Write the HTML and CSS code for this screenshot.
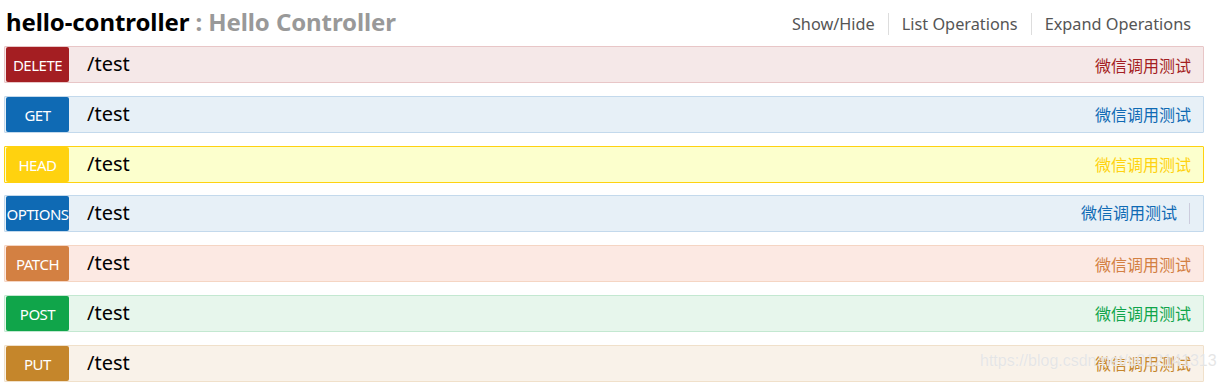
FILE: index.html
```html
<!DOCTYPE html>
<html lang="en">
<head>
    <meta charset="UTF-8">
    <title>hello-controller</title>
    <link rel="stylesheet" href="styles.css">
</head>
<body>

<div class="resource">
    <div class="heading">
        <h2><span class="name">hello-controller</span> <span class="desc">: Hello Controller</span></h2>
        <ul class="options">
            <li><a href="#">Show/Hide</a></li>
            <li><a href="#">List Operations</a></li>
            <li><a href="#">Expand Operations</a></li>
        </ul>
    </div>

    <div class="operation delete">
        <span class="method">DELETE</span>
        <span class="path">/test</span>
        <span class="summary">微信调用测试</span>
    </div>
    <div class="operation get">
        <span class="method">GET</span>
        <span class="path">/test</span>
        <span class="summary">微信调用测试</span>
    </div>
    <div class="operation head">
        <span class="method">HEAD</span>
        <span class="path">/test</span>
        <span class="summary">微信调用测试</span>
    </div>
    <div class="operation options-op">
        <span class="method">OPTIONS</span>
        <span class="path">/test</span>
        <span class="summary divided">微信调用测试</span>
    </div>
    <div class="operation patch">
        <span class="method">PATCH</span>
        <span class="path">/test</span>
        <span class="summary">微信调用测试</span>
    </div>
    <div class="operation post">
        <span class="method">POST</span>
        <span class="path">/test</span>
        <span class="summary">微信调用测试</span>
    </div>
    <div class="operation put">
        <span class="method">PUT</span>
        <span class="path">/test</span>
        <span class="summary">微信调用测试</span>
    </div>
</div>

<div class="watermark">https://blog.csdn.net/u012141313</div>

</body>
</html>
```

FILE: styles.css
```css
body {
    margin: 0;
    font-family: "Noto Sans", "Noto Sans CJK SC", sans-serif;
    background: #fff;
    color: #000;
}

.resource {
    width: 1200px;
    padding-left: 4px;
}

.heading {
    display: flex;
    align-items: center;
    justify-content: space-between;
    height: 46px;
}

.heading h2 {
    margin: 0 0 4px 2px;
    font-size: 24px;
    font-weight: bold;
    letter-spacing: -0.1px;
}

.heading .desc {
    color: #999;
}

.options {
    display: flex;
    list-style: none;
    margin: 2px 13px 0 0;
    padding: 0;
}

.options li {
    padding: 0 13px;
    border-left: 1px solid #ddd;
    line-height: 22px;
}

.options li:first-child {
    border-left: none;
}

.options li:last-child {
    padding-right: 0;
}

.options a {
    color: #555;
    text-decoration: none;
    font-size: 16.3px;
}

.operation {
    display: flex;
    align-items: center;
    height: 35px;
    margin-bottom: 12.8px;
    border: 1px solid;
    border-radius: 1px;
}

.method {
    width: 63px;
    height: 35px;
    line-height: 36px;
    margin-left: 1px;
    border-radius: 2px;
    color: #fff;
    font-size: 15px;
    text-align: center;
    letter-spacing: -0.5px;
    white-space: nowrap;
    overflow: hidden;
}

.path {
    flex: 1;
    padding-left: 18px;
    font-size: 20px;
    margin-top: -2px;
}

.summary {
    padding-right: 12px;
    font-size: 16px;
}

.summary.divided {
    padding-right: 12px;
    margin-right: 13px;
    border-right: 1px solid #ccd;
    line-height: 21px;
}

.delete { background: #f5e8e8; border-color: #e8c6c7; }
.delete .method { background: #a41e22; }
.delete .summary { color: #a41e22; }

.get { background: #e7f0f7; border-color: #c3d9ec; }
.get .method { background: #0f6ab4; }
.get .summary { color: #0f6ab4; }

.head { background: #fcffcd; border-color: #ffd20f; }
.head .method { background: #ffd20f; }
.head .summary { color: #ffd20f; }

.options-op { background: #e7f0f7; border-color: #c3d9ec; }
.options-op .method { background: #0f6ab4; }
.options-op .summary { color: #0f6ab4; }

.patch { background: #fce9e3; border-color: #f5d5c3; }
.patch .method { background: #d38042; }
.patch .summary { color: #d38042; }

.post { background: #e7f6ec; border-color: #c3e8d1; }
.post .method { background: #10a54a; }
.post .summary { color: #10a54a; }

.put { background: #f9f2e9; border-color: #f0e0ca; }
.put .method { background: #c5862b; }
.put .summary { color: #c5862b; }

.watermark {
    position: absolute;
    left: 980px;
    top: 352px;
    font-family: "Liberation Sans", Arial, sans-serif;
    font-size: 16px;
    color: rgba(225, 225, 225, 0.85);
    text-shadow: 0 0 1px rgba(255, 255, 255, 0.8);
    pointer-events: none;
}
```
